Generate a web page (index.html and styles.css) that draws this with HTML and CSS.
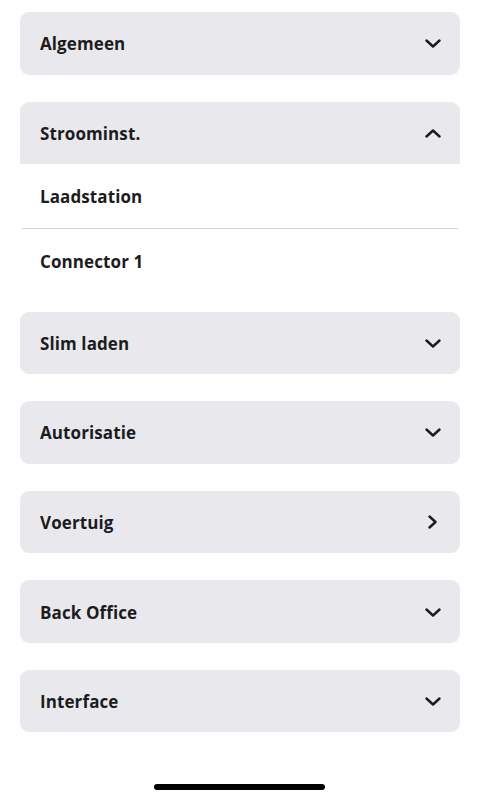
FILE: index.html
```html
<!DOCTYPE html>
<html lang="nl">
<head>
<meta charset="utf-8">
<title>Instellingen</title>
<link rel="stylesheet" href="styles.css">
</head>
<body>
<main class="list">
  <section class="card">
    <div class="head"><span class="title">Algemeen</span>
      <svg class="chev" viewBox="0 0 16 9"><path d="M1.5 1.5 L8 7.5 L14.5 1.5"/></svg></div>
  </section>
  <section class="card open">
    <div class="head"><span class="title">Stroominst.</span>
      <svg class="chev" viewBox="0 0 16 9"><path d="M1.5 7.5 L8 1.5 L14.5 7.5"/></svg></div>
    <div class="body">
      <div class="row"><span class="title">Laadstation</span></div>
      <div class="sep"></div>
      <div class="row"><span class="title">Connector 1</span></div>
    </div>
  </section>
  <section class="card">
    <div class="head"><span class="title">Slim laden</span>
      <svg class="chev" viewBox="0 0 16 9"><path d="M1.5 1.5 L8 7.5 L14.5 1.5"/></svg></div>
  </section>
  <section class="card">
    <div class="head"><span class="title">Autorisatie</span>
      <svg class="chev" viewBox="0 0 16 9"><path d="M1.5 1.5 L8 7.5 L14.5 1.5"/></svg></div>
  </section>
  <section class="card">
    <div class="head"><span class="title">Voertuig</span>
      <svg class="chev right" viewBox="0 0 9 14"><path d="M1.5 1.5 L7.5 7 L1.5 12.5"/></svg></div>
  </section>
  <section class="card">
    <div class="head"><span class="title">Back Office</span>
      <svg class="chev" viewBox="0 0 16 9"><path d="M1.5 1.5 L8 7.5 L14.5 1.5"/></svg></div>
  </section>
  <section class="card">
    <div class="head"><span class="title">Interface</span>
      <svg class="chev" viewBox="0 0 16 9"><path d="M1.5 1.5 L8 7.5 L14.5 1.5"/></svg></div>
  </section>
</main>
<div class="home"></div>
</body>
</html>
```
FILE: styles.css
```css
html, body {
  margin: 0;
  padding: 0;
  background: #ffffff;
}
body {
  width: 477px;
  height: 800px;
  position: relative;
  font-family: "Open Sans", "Noto Sans", "Liberation Sans", sans-serif;
  color: #1c1c1e;
  overflow: hidden;
}
.list {
  display: flex;
  flex-direction: column;
  gap: 27px;
  padding: 12px 17px 0 20px;
}
.card {
  background: #e9e9ed;
  border-radius: 9px;
  overflow: hidden;
}
.head {
  height: 62.6px;
  display: flex;
  align-items: center;
  justify-content: space-between;
  padding: 1px 19px 0 20px;
  box-sizing: border-box;
}
.title {
  font-size: 17px;
  font-weight: 700;
  letter-spacing: 0.1px;
}
.chev {
  width: 16px;
  height: 9px;
  fill: none;
  stroke: #1c1c1e;
  stroke-width: 2.4;
  stroke-linecap: round;
  stroke-linejoin: round;
}
.chev.right {
  width: 9px;
  height: 14px;
  margin-right: 4px;
}
.card.open {
  border-radius: 9px 9px 0 0;
  margin-bottom: -8.7px;
}
.body {
  background: #ffffff;
  display: flex;
  flex-direction: column;
}
.row {
  height: 64px;
  display: flex;
  align-items: center;
  padding-left: 20px;
}
.sep {
  height: 1px;
  background: #d2d2d6;
  margin: 0 2px;
}
.home {
  position: absolute;
  left: 154px;
  top: 784px;
  width: 171px;
  height: 6px;
  border-radius: 3px;
  background: #000000;
}
```
